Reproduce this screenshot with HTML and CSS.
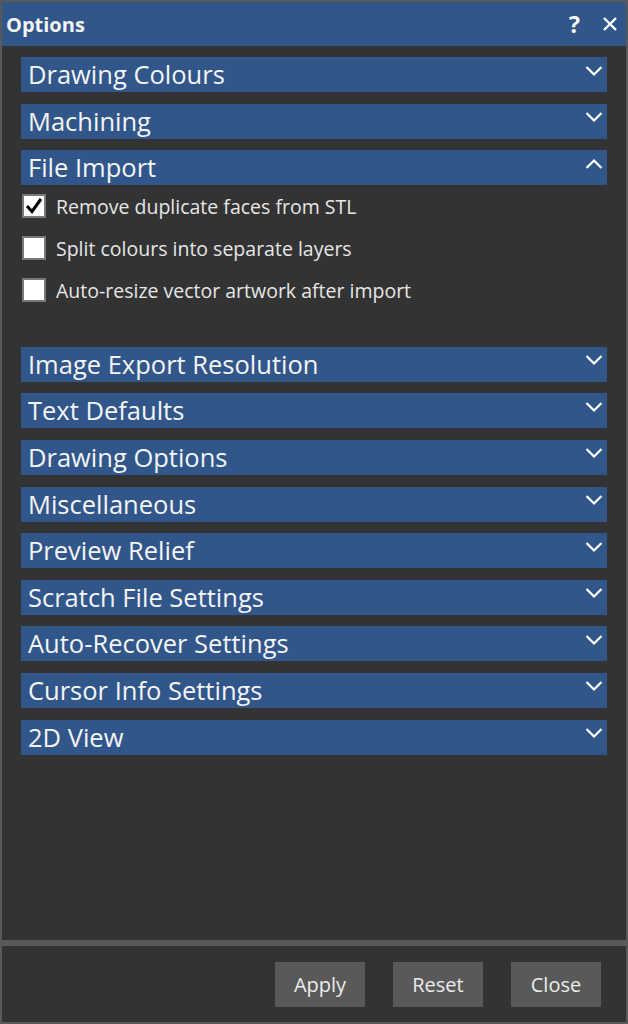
FILE: index.html
```html
<!DOCTYPE html>
<html lang="en">
<head>
  <meta charset="UTF-8" />
  <title>Options</title>
  <link rel="stylesheet" href="styles.css">
</head>
<body>

<div class="dialog">

  <!-- Title bar -->
  <div class="titlebar">
    <span class="title">Options</span>
    <span class="title-btn help">?</span>
    <span class="title-btn close">
      <svg width="16" height="16" viewBox="0 0 16 16"><path d="M2 2 L14 14 M14 2 L2 14" stroke="#fff" stroke-width="2.4" fill="none"/></svg>
    </span>
  </div>

  <div class="content">

    <div class="section">
      <div class="section-head"><span>Drawing Colours</span><svg class="chev" viewBox="0 0 18 12"><polyline points="1.5,2 9,9.5 16.5,2"/></svg></div>
    </div>

    <div class="section">
      <div class="section-head"><span>Machining</span><svg class="chev" viewBox="0 0 18 12"><polyline points="1.5,2 9,9.5 16.5,2"/></svg></div>
    </div>

    <div class="section open">
      <div class="section-head"><span>File Import</span><svg class="chev" viewBox="0 0 18 12"><polyline points="1.5,10 9,2.5 16.5,10"/></svg></div>
      <div class="section-body">
        <label class="check-row">
          <span class="box checked">
            <svg viewBox="0 0 20 20"><polyline points="3,10 8,15.5 17,3"/></svg>
          </span>
          Remove duplicate faces from STL
        </label>
        <label class="check-row">
          <span class="box"></span>
          Split colours into separate layers
        </label>
        <label class="check-row">
          <span class="box"></span>
          Auto-resize vector artwork after import
        </label>
      </div>
    </div>

    <div class="section">
      <div class="section-head"><span>Image Export Resolution</span><svg class="chev" viewBox="0 0 18 12"><polyline points="1.5,2 9,9.5 16.5,2"/></svg></div>
    </div>

    <div class="section">
      <div class="section-head"><span>Text Defaults</span><svg class="chev" viewBox="0 0 18 12"><polyline points="1.5,2 9,9.5 16.5,2"/></svg></div>
    </div>

    <div class="section">
      <div class="section-head"><span>Drawing Options</span><svg class="chev" viewBox="0 0 18 12"><polyline points="1.5,2 9,9.5 16.5,2"/></svg></div>
    </div>

    <div class="section">
      <div class="section-head"><span>Miscellaneous</span><svg class="chev" viewBox="0 0 18 12"><polyline points="1.5,2 9,9.5 16.5,2"/></svg></div>
    </div>

    <div class="section">
      <div class="section-head"><span>Preview Relief</span><svg class="chev" viewBox="0 0 18 12"><polyline points="1.5,2 9,9.5 16.5,2"/></svg></div>
    </div>

    <div class="section">
      <div class="section-head"><span>Scratch File Settings</span><svg class="chev" viewBox="0 0 18 12"><polyline points="1.5,2 9,9.5 16.5,2"/></svg></div>
    </div>

    <div class="section">
      <div class="section-head"><span>Auto-Recover Settings</span><svg class="chev" viewBox="0 0 18 12"><polyline points="1.5,2 9,9.5 16.5,2"/></svg></div>
    </div>

    <div class="section">
      <div class="section-head"><span>Cursor Info Settings</span><svg class="chev" viewBox="0 0 18 12"><polyline points="1.5,2 9,9.5 16.5,2"/></svg></div>
    </div>

    <div class="section">
      <div class="section-head"><span>2D View</span><svg class="chev" viewBox="0 0 18 12"><polyline points="1.5,2 9,9.5 16.5,2"/></svg></div>
    </div>

  </div>

  <!-- Footer buttons -->
  <div class="footer">
    <button class="btn">Apply</button>
    <button class="btn">Reset</button>
    <button class="btn">Close</button>
  </div>

</div>

</body>
</html>
```

FILE: styles.css
```css
body {
  margin: 0;
  padding: 0;
  background: #595959;
  font-family: 'Open Sans', 'Noto Sans', sans-serif;
  color: #f0f0f0;
}

.dialog {
  width: 628px;
  height: 1024px;
  box-sizing: border-box;
  border: 2px solid #595959;
  background: #333333;
  display: flex;
  flex-direction: column;
}

.titlebar {
  height: 44px;
  background: #31568a;
  display: flex;
  align-items: center;
  padding: 0 8px 0 4px;
}

.title {
  flex: 1;
  font-size: 20px;
  font-weight: bold;
  color: #f4f4f4;
}

.title-btn {
  color: #fff;
  font-weight: bold;
  font-size: 23px;
  display: flex;
  align-items: center;
}

.help {
  margin-right: 22px;
}

.content {
  flex: 1;
  padding: 11px 19px 0 19px;
}

.section {
  margin-bottom: 11.6px;
}

.section-head {
  height: 35px;
  background: #31568a;
  display: flex;
  align-items: flex-start;
  justify-content: space-between;
  padding: 0 4px 0 7px;
  font-size: 25.5px;
  line-height: 35px;
  color: #f4f4f4;
}

.chev {
  width: 18px;
  height: 12px;
  margin-top: 7.5px;
}

.chev polyline {
  fill: none;
  stroke: #fff;
  stroke-width: 2.2;
}

.section-body {
  padding: 0 0 24px 1px;
}

.check-row {
  height: 42px;
  display: flex;
  align-items: center;
  font-size: 19.5px;
  color: #e6e6e6;
}

.box {
  width: 20px;
  height: 20px;
  border: 2px solid #7a7a7a;
  background: #fff;
  margin-right: 10px;
  flex: none;
  display: flex;
}

.box svg {
  width: 20px;
  height: 20px;
}

.box polyline {
  fill: none;
  stroke: #000;
  stroke-width: 3;
}

.footer {
  height: 82px;
  border-top: 6px solid #595959;
  display: flex;
  justify-content: flex-end;
  align-items: flex-start;
  gap: 28px;
  padding: 16px 25px 0 0;
  box-sizing: border-box;
}

.btn {
  width: 90px;
  height: 45px;
  background: #595959;
  border: none;
  color: #ececec;
  font-family: 'Open Sans', 'Noto Sans', sans-serif;
  font-size: 20px;
  padding: 0;
}
```
